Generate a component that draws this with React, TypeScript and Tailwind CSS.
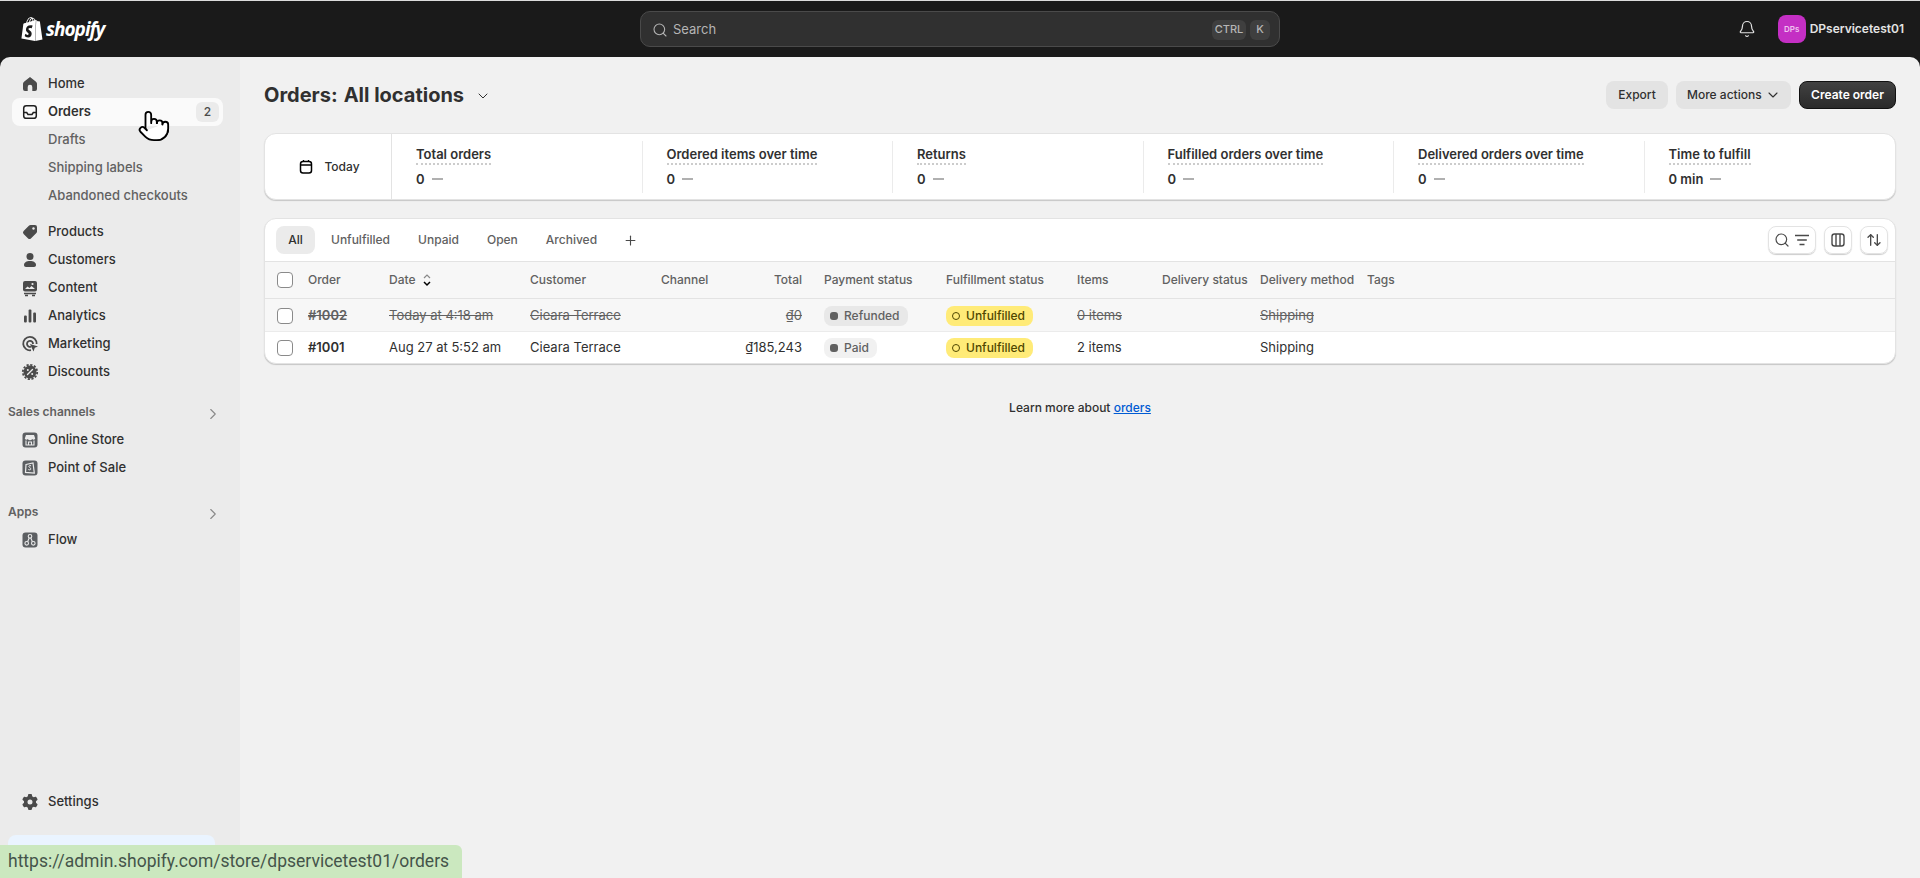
import { ArrowUpDown, Bell, ChevronDown, ChevronRight, Plus, Pointer, Search } from 'lucide-react'
import { FaGear } from 'react-icons/fa6'
import { SiShopify } from 'react-icons/si'
import type { ReactNode } from 'react'

const G = 'fill-[#4a4a4a]'

function Ico({ children }: { children: ReactNode }) {
  return (
    <svg viewBox="0 0 20 20" className="h-5 w-5 shrink-0">
      {children}
    </svg>
  )
}

const HomeIcon = (
  <Ico>
    <path className={G} d="M10 3 4 7.800c-.6.5-1 1.200-1 2V15a2 2 0 0 0 2 2h2.700v-4a2.300 2.300 0 0 1 4.600 0v4H15a2 2 0 0 0 2-2V9.800c0-.8-.4-1.500-1-2Z" />
  </Ico>
)
const OrdersIcon = (
  <Ico>
    <rect x="3.700" y="3.700" width="12.600" height="12.600" rx="2.600" fill="none" stroke="#1f1f1f" strokeWidth="1.500" />
    <path d="M3.700 10.500h3l1.300 2h4l1.300-2h3" fill="none" stroke="#1f1f1f" strokeWidth="1.500" />
  </Ico>
)
const TagIcon = (
  <Ico>
    <path className={G} d="M10.500 3H15a2 2 0 0 1 2 2v4.500c0 .5-.2 1-.6 1.400l-5.500 5.500a2 2 0 0 1-2.800 0l-4.500-4.500a2 2 0 0 1 0-2.800l5.500-5.500c.4-.4.9-.6 1.400-.6Z" />
    <circle cx="13.500" cy="6.500" r="1.200" fill="#ebebeb" />
  </Ico>
)
const PersonIcon = (
  <Ico>
    <circle className={G} cx="10" cy="6.500" r="3.500" />
    <path className={G} d="M4 15c0-2.500 2.500-4 6-4s6 1.500 6 4c0 1.200-.8 2-2 2H6c-1.200 0-2-.8-2-2Z" />
  </Ico>
)
const ContentIcon = (
  <Ico>
    <rect className={G} x="3" y="3" width="14" height="10.500" rx="2" />
    <path d="m5 11 2.500-2.500 2 1.500 2-2 3.500 3Z" fill="#ebebeb" />
    <circle cx="12.500" cy="6" r="1.100" fill="#ebebeb" />
    <path d="M4 15.500h12M5 17.500h3M12 17.500h3" stroke="#4a4a4a" strokeWidth="1.300" />
  </Ico>
)
const AnalyticsIcon = (
  <Ico>
    <rect className={G} x="4" y="9.500" width="2.800" height="7" rx="1" />
    <rect className={G} x="8.600" y="3.500" width="2.800" height="13" rx="1" />
    <rect className={G} x="13.200" y="6.500" width="2.800" height="10" rx="1" />
  </Ico>
)
const MarketingIcon = (
  <Ico>
    <path d="M11 16.200A6.700 6.700 0 1 1 16.600 10" fill="none" stroke="#4a4a4a" strokeWidth="1.800" />
    <path d="M11 12.700A3 3 0 1 1 13 10" fill="none" stroke="#4a4a4a" strokeWidth="1.800" />
    <path className={G} d="m10 10 8 2.500-3.200 1.300-1.300 3.700Z" />
  </Ico>
)
const DiscountIcon = (
  <Ico>
    <circle className={G} cx="10" cy="10" r="6.500" />
    <circle cx="10" cy="10" r="7.200" fill="none" stroke="#4a4a4a" strokeWidth="1.800" strokeDasharray="2.200 1.570" />
    <path d="m7.500 12.500 5-5" stroke="#ebebeb" strokeWidth="1.400" strokeLinecap="round" />
    <circle cx="7.800" cy="8" r="1" fill="#ebebeb" />
    <circle cx="12.200" cy="12" r="1" fill="#ebebeb" />
  </Ico>
)
const StoreIcon = (
  <Ico>
    <rect x="2.500" y="2.500" width="15" height="15" rx="3" fill="#5c5f62" />
    <path d="M6 5h8l1.200 3.500a1.700 1.700 0 0 1-3 .6 2.600 2.600 0 0 1-4.400 0 1.700 1.700 0 0 1-3-.6Z" fill="#ebebeb" />
    <path d="M6 10.500V15h8v-4.500M8.500 15v-3h3v3" fill="none" stroke="#ebebeb" strokeWidth="1.100" />
  </Ico>
)
const PosIcon = (
  <Ico>
    <rect x="2.500" y="2.500" width="15" height="15" rx="3" fill="#5c5f62" />
    <path d="M6 6.500 13 5l1.300 10-8.800-.6Z" fill="none" stroke="#ebebeb" strokeWidth="1.200" />
    <path d="M11 7.800c-1.500-.6-2.500.1-2 1.100.4.800 2 1 1.800 2.200-.2.900-1.500 1-2.500.4" fill="none" stroke="#ebebeb" strokeWidth="1" />
  </Ico>
)
const FlowIcon = (
  <Ico>
    <rect x="2.500" y="2.500" width="15" height="15" rx="3" fill="#5c5f62" />
    <circle cx="10" cy="6.300" r="1.800" fill="none" stroke="#ebebeb" strokeWidth="1.100" />
    <circle cx="6.700" cy="13.300" r="1.800" fill="none" stroke="#ebebeb" strokeWidth="1.100" />
    <circle cx="13.300" cy="13.300" r="1.800" fill="none" stroke="#ebebeb" strokeWidth="1.100" />
    <path d="m9.200 8-1.600 3.700M10.800 8l1.600 3.700" stroke="#ebebeb" strokeWidth="1.100" />
  </Ico>
)

function NavRow({ icon, label, active, badge }: { icon?: ReactNode; label: string; active?: boolean; badge?: string }) {
  return (
    <div
      className={`flex h-7 items-center gap-2 rounded-lg pl-2 pr-1 text-[13px] ${
        active ? 'bg-[#fafafa] font-semibold text-[#303030]' : 'font-medium text-[#303030]'
      }`}
    >
      {icon}
      <span>{label}</span>
      {badge && (
        <span className="ml-auto flex h-5 w-[23px] items-center justify-center rounded-md bg-[#ebebeb] text-xs font-medium text-[#4a4a4a]">
          {badge}
        </span>
      )}
    </div>
  )
}

function SubRow({ label }: { label: string }) {
  return <div className="flex h-7 items-center pl-9 text-[13px] font-medium text-[#616161]">{label}</div>
}

function SectionHead({ label }: { label: string }) {
  return (
    <div className="-mx-1 flex h-7 items-center justify-between pr-[5px] text-xs font-semibold text-[#616161]">
      <span>{label}</span>
      <ChevronRight size={18} strokeWidth={1.5} className="mt-1 text-[#8a8a8a]" />
    </div>
  )
}

function Sidebar() {
  return (
    <aside className="flex w-[240px] shrink-0 flex-col bg-[#ebebeb] pl-3 pr-[17px] pt-[13px]">
      <NavRow icon={HomeIcon} label="Home" />
      <div className="relative">
        <NavRow icon={OrdersIcon} label="Orders" active badge="2" />
        <Pointer size={34} strokeWidth={1.3} className="absolute left-[125px] top-[11px] fill-white text-black" />
      </div>
      <SubRow label="Drafts" />
      <SubRow label="Shipping labels" />
      <SubRow label="Abandoned checkouts" />
      <div className="mt-2">
        <NavRow icon={TagIcon} label="Products" />
        <NavRow icon={PersonIcon} label="Customers" />
        <NavRow icon={ContentIcon} label="Content" />
        <NavRow icon={AnalyticsIcon} label="Analytics" />
        <NavRow icon={MarketingIcon} label="Marketing" />
        <NavRow icon={DiscountIcon} label="Discounts" />
      </div>
      <div className="mt-3">
        <SectionHead label="Sales channels" />
        <NavRow icon={StoreIcon} label="Online Store" />
        <NavRow icon={PosIcon} label="Point of Sale" />
      </div>
      <div className="mt-4">
        <SectionHead label="Apps" />
        <NavRow icon={FlowIcon} label="Flow" />
      </div>
      <div className="mt-auto">
        <NavRow icon={<FaGear size={16} className="mx-0.5 text-[#4a4a4a]" />} label="Settings" />
      </div>
      <div className="-ml-1 mt-[19px] h-[43px] w-[207px] rounded-t-lg bg-[#eaf4ff]" />
    </aside>
  )
}

function TopBar() {
  return (
    <header className="relative flex h-[57px] shrink-0 items-center border-t border-[#dcdcdc] bg-[#1a1a1a] pl-5 pr-4">
      <div className="flex w-[620px] items-center gap-[2px] text-white">
        <SiShopify size={24} />
        <span className="font-['Open_Sans'] text-[19px] font-bold italic leading-none tracking-[-1px]">shopify</span>
      </div>
      <div className="flex h-9 w-[640px] items-center rounded-[10px] border border-[#4a4a4a] bg-[#303030] pl-[11px] pr-[9px] pt-px text-[#b5b5b5]">
        <Search size={16} strokeWidth={1.6} />
        <span className="ml-[5px] text-[13px]">Search</span>
        <span className="ml-auto flex h-5 w-[34px] items-center justify-center rounded-md bg-[#3f3f3f] text-[11px] font-medium">CTRL</span>
        <span className="ml-1 flex h-5 w-5 items-center justify-center rounded-md bg-[#3f3f3f] text-[11px] font-medium">K</span>
      </div>
      <div className="ml-auto flex items-center text-[#e3e3e3]">
        <Bell size={18} strokeWidth={1.6} className="mr-[22px]" />
        <span className="mr-1 flex h-7 w-7 items-center justify-center rounded-lg bg-[#c42fc4] text-[8px] font-semibold text-[#f0c4f0]">DPs</span>
        <span className="text-xs font-semibold">DPservicetest01</span>
      </div>
    </header>
  )
}

const metrics = [
  { title: 'Total orders', value: '0' },
  { title: 'Ordered items over time', value: '0' },
  { title: 'Returns', value: '0' },
  { title: 'Fulfilled orders over time', value: '0' },
  { title: 'Delivered orders over time', value: '0' },
  { title: 'Time to fulfill', value: '0 min' },
]

function MetricsCard() {
  return (
    <section className="mt-6 flex h-[67px] items-stretch rounded-xl border border-[#e3e3e3] bg-white shadow-[0_1px_1px_rgba(0,0,0,0.18)]">
      <div className="flex w-[127px] shrink-0 items-center justify-center gap-[10px] border-r border-[#e3e3e3] pl-[2px] text-xs font-medium text-[#303030]">
        <svg viewBox="0 0 16 16" className="h-4 w-4">
          <rect x="2.500" y="2.500" width="11" height="11.500" rx="2.500" fill="none" stroke="#000" strokeWidth="1.500" />
          <path d="M2.500 6h11M5.500 1v2M10.500 1v2" stroke="#000" strokeWidth="1.300" />
        </svg>
        Today
      </div>
      <div className="flex flex-1 items-center">
        {metrics.map((m, i) => (
          <div key={m.title} className={`flex h-[52px] w-[250.500px] flex-col pl-6 pt-[5px] ${i < 5 ? 'border-r border-[#ebebeb]' : ''}`}>
            <span className="w-fit border-b-2 border-dotted border-[#cccccc] text-[13px] font-semibold leading-[17px] text-[#303030]">{m.title}</span>
            <div className="mt-1 flex items-center gap-[7px] text-[13px] font-semibold leading-5 text-[#303030]">
              {m.value}
              <span className="h-[2px] w-[11px] bg-[#b0b0b0]" />
            </div>
          </div>
        ))}
      </div>
    </section>
  )
}

function Badge({ tone, label }: { tone: 'refunded' | 'paid' | 'yellow'; label: string }) {
  const bg = tone === 'yellow' ? 'bg-[#ffeb78] text-[#4f4700]' : tone === 'refunded' ? 'bg-[#e8e8e8] text-[#616161]' : 'bg-[#f1f1f1] text-[#616161]'
  return (
    <span className={`inline-flex h-5 items-center gap-[6px] rounded-lg pl-[6px] pr-2 text-xs font-medium ${bg}`}>
      {tone === 'yellow' ? (
        <span className="h-2 w-2 rounded-full border-[1.5px] border-[#4f4700]" />
      ) : (
        <span className="h-2 w-2 rounded-[3px] bg-[#616161]" />
      )}
      {label}
    </span>
  )
}

function Check() {
  return <span className="block h-4 w-4 rounded-[4px] border border-[#8a8a8a] bg-white" />
}

const heads = ['Order', 'Date', 'Customer', 'Channel', 'Total', 'Payment status', 'Fulfillment status', 'Items', 'Delivery status', 'Delivery method', 'Tags']

const orders = [
  { id: '#1002', date: 'Today at 4:18 am', total: '₫0', pay: 'refunded' as const, payLabel: 'Refunded', items: '0 items', old: true },
  { id: '#1001', date: 'Aug 27 at 5:52 am', total: '₫185,243', pay: 'paid' as const, payLabel: 'Paid', items: '2 items', old: false },
]

function OrdersTable() {
  return (
    <section className="mt-[18px] overflow-hidden rounded-xl border border-[#e3e3e3] bg-white shadow-[0_1px_1px_rgba(0,0,0,0.18)]">
      <div className="flex h-[42px] items-center pl-[11px] pr-[7px] text-xs font-medium text-[#616161]">
        <span className="flex h-7 w-[39px] items-center justify-center rounded-lg bg-[#ebebeb] text-[#303030]">All</span>
        <span className="ml-4">Unfulfilled</span>
        <span className="ml-7">Unpaid</span>
        <span className="ml-7">Open</span>
        <span className="ml-7">Archived</span>
        <Plus size={15} strokeWidth={1.8} className="ml-[26px] text-[#4a4a4a]" />
        <button className="ml-auto flex h-7 w-12 items-center justify-center gap-1 rounded-lg border border-[#e3e3e3] shadow-[0_1px_1px_rgba(0,0,0,0.2)]">
          <Search size={16} strokeWidth={1.8} className="text-[#4a4a4a]" />
          <svg viewBox="0 0 16 16" className="h-4 w-4">
            <path d="M1 3.500h14M3.200 8h9.600M5.500 12.500h5" stroke="#4a4a4a" strokeWidth="1.600" />
          </svg>
        </button>
        <button className="ml-2 flex h-7 w-7 items-center justify-center rounded-lg border border-[#e3e3e3] shadow-[0_1px_1px_rgba(0,0,0,0.2)]">
          <svg viewBox="0 0 16 16" className="h-4 w-4">
            <rect x="2" y="2" width="12" height="12" rx="2.500" fill="none" stroke="#4a4a4a" strokeWidth="1.400" />
            <path d="M6 2v12M10 2v12" stroke="#4a4a4a" strokeWidth="1.400" />
          </svg>
        </button>
        <button className="ml-2 flex h-7 w-7 items-center justify-center rounded-lg border border-[#e3e3e3] text-[#4a4a4a] shadow-[0_1px_1px_rgba(0,0,0,0.2)]">
          <ArrowUpDown size={16} strokeWidth={2} />
        </button>
      </div>
      <table className="w-full table-fixed text-left">
        <colgroup>
          <col className="w-[43px]" />
          <col className="w-[81px]" />
          <col className="w-[141px]" />
          <col className="w-[131px]" />
          <col className="w-[80px]" />
          <col className="w-[83px]" />
          <col className="w-[122px]" />
          <col className="w-[131px]" />
          <col className="w-[85px]" />
          <col className="w-[98px]" />
          <col className="w-[107px]" />
          <col />
        </colgroup>
        <thead>
          <tr className="h-[37px] border-y border-[#e3e3e3] bg-[#f7f7f7] text-xs font-medium text-[#616161]">
            <th className="pl-3">
              <Check />
            </th>
            {heads.map((h) => (
              <th key={h} className={`font-medium ${h === 'Total' ? 'pr-[22px] text-right' : ''}`}>
                {h === 'Date' ? (
                  <span className="flex items-center gap-[6px]">
                    {h}
                    <svg viewBox="0 0 10 14" className="h-[14px] w-[10px]">
                      <path d="m2 5 3-3 3 3" fill="none" stroke="#8a8a8a" strokeWidth="1.200" />
                      <path d="m2 9 3 3 3-3" fill="none" stroke="#000" strokeWidth="1.500" />
                    </svg>
                  </span>
                ) : (
                  h
                )}
              </th>
            ))}
          </tr>
        </thead>
        <tbody className="text-[13px] text-[#303030] [&_td]:pt-px">
          {orders.map((o) => (
            <tr key={o.id} className={o.old ? 'h-[33px] border-b border-[#ebebeb] bg-[#f7f7f7] text-[#616161]' : 'h-[31px]'}>
              <td className="pl-3">
                <Check />
              </td>
              <td className={o.old ? 'font-semibold line-through' : 'font-semibold'}>{o.id}</td>
              <td className={o.old ? 'line-through' : ''}>{o.date}</td>
              <td className={o.old ? 'line-through' : ''}>Cieara Terrace</td>
              <td />
              <td className={`pr-[22px] text-right ${o.old ? 'line-through' : ''}`}>{o.total}</td>
              <td>
                <Badge tone={o.pay} label={o.payLabel} />
              </td>
              <td>
                <Badge tone="yellow" label="Unfulfilled" />
              </td>
              <td className={o.old ? 'line-through' : ''}>{o.items}</td>
              <td />
              <td className={o.old ? 'line-through' : ''}>Shipping</td>
              <td />
            </tr>
          ))}
        </tbody>
      </table>
    </section>
  )
}

function Main() {
  return (
    <main className="flex-1 bg-[#f1f1f1] px-6 pt-6">
      <div className="flex h-7 items-center text-[#303030]">
        <h1 className="flex gap-[6px] text-xl font-bold">
          <span>Orders:</span>
          <span>All locations</span>
        </h1>
        <ChevronDown size={16} strokeWidth={1.5} className="ml-[11px] mt-[2px] text-[#303030]" />
        <button className="ml-auto h-7 w-[62px] rounded-lg bg-[#e3e3e3] text-xs font-medium">Export</button>
        <button className="ml-2 flex h-7 w-[115px] items-center gap-[3px] rounded-lg bg-[#e3e3e3] pl-[11px] text-xs font-medium">
          More actions
          <ChevronDown size={16} strokeWidth={1.6} />
        </button>
        <button className="ml-2 h-7 w-[97px] rounded-lg border border-[#111] bg-gradient-to-b from-[#424242] to-[#2a2a2a] text-xs font-semibold text-white">
          Create order
        </button>
      </div>
      <MetricsCard />
      <OrdersTable />
      <p className="mt-[34px] text-center text-xs font-medium leading-5 text-[#303030]">
        Learn more about{' '}
        <a href="#" className="text-[#005bd3] underline">
          orders
        </a>
      </p>
    </main>
  )
}

export default function App() {
  return (
    <div className="relative flex h-[878px] flex-col overflow-hidden bg-[#1a1a1a] font-['Inter',sans-serif]">
      <TopBar />
      <div className="flex min-h-0 flex-1 overflow-hidden rounded-t-[10px]">
        <Sidebar />
        <Main />
      </div>
      <div className="absolute bottom-0 left-0 flex h-[33px] w-[462px] items-center rounded-tr-md bg-[#cbe8bf] pl-2 font-['Roboto',sans-serif] text-[17.500px] text-[#44544a]">
        https://admin.shopify.com/store/dpservicetest01/orders
      </div>
    </div>
  )
}
